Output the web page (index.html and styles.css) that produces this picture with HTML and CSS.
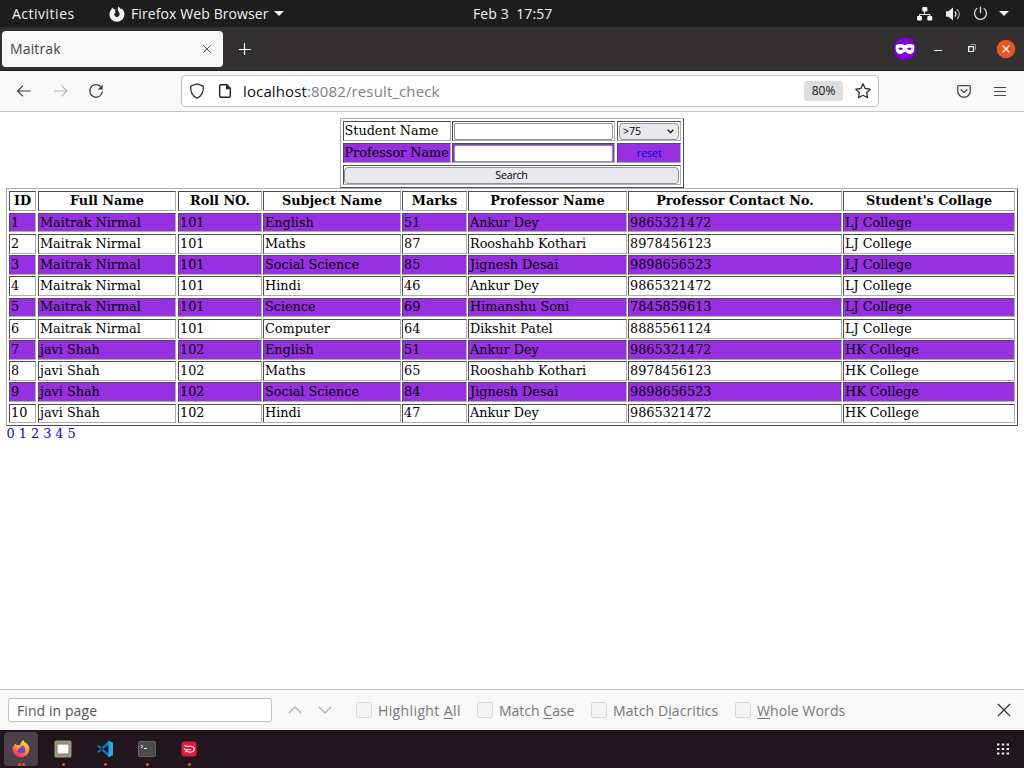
FILE: index.html
```html
<!DOCTYPE html>
<html lang="en">
<head>
<meta charset="utf-8">
<title>Maitrak</title>
<link rel="stylesheet" href="styles.css">
</head>
<body>
<div class="desktop">
  <header class="topbar">
    <span class="activities">Activities</span>
    <svg class="app-icon" width="16" height="16" viewBox="0 0 16 16"><path fill="#f2f2f2" d="M3.2 1.6 5.2 3.4 7 3.5 5.8 5.3 6.8 6.5C5.5 6.8 5 8 5.5 9.2 6 10.6 7.5 11.4 9 10.8 10.9 10 11.1 7.6 9.8 6.1 8.6 4.7 8.4 2.1 9.6.3 10.3 1.8 11.4 2.3 12.3 3.5L12.6 2.2C14.6 4 15.7 6.2 15.4 8.8 15 12.8 12 15.7 8 15.7 3.7 15.7.5 12.5.5 8.5.5 6.3 1.1 4.8 2.2 3.7Z"/></svg>
    <span class="app-name">Firefox Web Browser</span>
    <i class="caret"></i>
    <span class="clock">Feb 3&nbsp; 17:57</span>
    <svg class="net" width="16" height="14" viewBox="0 0 16 14"><g fill="#f2f2f2"><rect x="5.2" y="0" width="5.2" height="4.5" rx="1"/><rect x="0" y="9" width="5" height="4.4" rx="1"/><rect x="10.3" y="9" width="5" height="4.4" rx="1"/></g><path d="M7.5 4v3M2.500 9V7.500h10.400V9" fill="none" stroke="#f2f2f2"/></svg>
    <svg class="vol" width="15" height="14" viewBox="0 0 15 14"><path fill="#f2f2f2" d="M0 4.3h2.500L7 .6v12.800L2.500 9.700H0z"/><path d="M9 4.400q1.800 2.600 0 5.200" fill="none" stroke="#f2f2f2" stroke-width="1.200"/><path d="M11 2.100q4.600 4.900 0 9.800" fill="none" stroke="#aaa" stroke-width="1.200"/></svg>
    <svg class="power" width="15" height="15" viewBox="0 0 15 15"><path d="M4.300 2.300a6 6 0 1 0 6.400 0M7.500.8v6.500" fill="none" stroke="#ddd" stroke-width="1.300"/></svg>
    <i class="caret"></i>
  </header>

  <div class="tabs">
    <div class="tab"><span>Maitrak</span><svg width="10" height="10" viewBox="0 0 10 10"><path d="m1.300 1.300 7.400 7.400M8.700 1.300 1.300 8.700" stroke="#555" stroke-width="1"/></svg></div>
    <svg class="plus" width="12" height="12" viewBox="0 0 12 12"><path d="M5.500 0v12M0 6.500h12" stroke="#fff" stroke-width="1.200"/></svg>
    <svg class="mask" width="24" height="24" viewBox="0 0 24 24"><circle cx="12" cy="12" r="11.300" fill="#8000d7"/><path fill="#fff" d="M2.800 8.600C5 6.400 9.500 6.700 12 8.300c2.500-1.600 7-1.900 9.200.3C21.800 12.500 21 17 16.800 17 14.500 17 13.500 15 12 15s-2.500 2-4.800 2C3 17 2.200 12.500 2.800 8.600z"/><path fill="#8000d7" d="M5.300 11.800q2.300-2.600 4.800 0-2.500 2.500-4.800 0zM13.900 11.800q2.500-2.600 4.800 0-2.300 2.500-4.800 0z"/></svg>
    <i class="minimize"></i>
    <svg class="restore" width="9" height="9" viewBox="0 0 9 9"><path d="M2.500.5h5v5.500" fill="none" stroke="#999"/><path d="M.7 2.700h4.800v4.800H.7z" fill="none" stroke="#fff" stroke-width="1.200"/></svg>
    <svg class="close" width="20" height="20" viewBox="0 0 20 20"><circle cx="10" cy="10" r="9.300" fill="#e95420"/><path d="m6.500 6.500 7 7M13.500 6.500l-7 7" stroke="#fff" stroke-width="1.300"/></svg>
  </div>

  <div class="toolbar">
    <svg class="back" width="16" height="14" viewBox="0 0 16 14"><path d="M14.800 7H1.800M7 1.600 1.600 7 7 12.400" fill="none" stroke="#3c3c3c" stroke-width="1.200"/></svg>
    <svg class="forward" width="16" height="14" viewBox="0 0 16 14"><path d="M1 7h13M8.600 1.600 14 7l-5.400 5.400" fill="none" stroke="#b5b5b5" stroke-width="1.200"/></svg>
    <svg class="reload" width="16" height="16" viewBox="0 0 16 16"><path d="M12.500 3.500A6.300 6.300 0 1 0 14.300 8.500" fill="none" stroke="#3c3c3c" stroke-width="1.300"/><path fill="#3c3c3c" d="M14.700 1.500v5H9.700z"/></svg>
    <div class="urlbar">
      <svg class="shield" width="16" height="16" viewBox="0 0 16 16"><path d="M8 .8 14.300 3.200C14.700 8.500 12.500 13 8 15.200 3.500 13 1.300 8.500 1.700 3.200Z" fill="none" stroke="#333" stroke-width="1.300" stroke-linejoin="round"/></svg>
      <svg class="page-icon" width="12" height="14" viewBox="0 0 12 14"><path d="M2 .7h5.800l3.500 3.600V12q0 1.300-1.300 1.300H2Q.7 13.300.7 12V2Q.7.7 2 .7z" fill="none" stroke="#222" stroke-width="1.400"/><path d="M7 .5v4.700h4.600z" fill="#222"/></svg>
      <span class="url"><b>localhost</b>:8082/result_check</span>
      <span class="zoom">80%</span>
      <svg class="star" width="16" height="16" viewBox="0 0 16 16"><path d="m8 .9 2.200 4.600 5 .7-3.600 3.500.9 5L8 12.300l-4.500 2.400.9-5L.8 6.200l5-.7z" fill="none" stroke="#333" stroke-width="1.300" stroke-linejoin="round"/></svg>
    </div>
    <svg class="pocket" width="14" height="13" viewBox="0 0 14 13"><path d="M2 .7h10q1.300 0 1.300 1.300v4.200a6.300 6 0 0 1-12.600 0V2Q.7.7 2 .7z" fill="none" stroke="#444" stroke-width="1.300"/><path d="m3.700 4.400 3.300 3 3.300-3" fill="none" stroke="#444" stroke-width="1.400"/></svg>
    <svg class="menu" width="12" height="11" viewBox="0 0 12 11"><path d="M0 1.500h12M0 5.500h12M0 9.500h12" stroke="#444" stroke-width="1.100"/></svg>
  </div>

  <main class="page">
    <form class="search-table">
      <div class="cell">Student Name</div>
      <div class="cell field"><input type="text"></div>
      <div class="cell field"><div class="select">&gt;75<svg width="7" height="5" viewBox="0 0 7 5"><path d="m.6.8 2.900 2.900L6.400.8" fill="none" stroke="#111" stroke-width="1.300"/></svg></div></div>
      <div class="cell purple">Professor Name</div>
      <div class="cell field purple"><input type="text"></div>
      <div class="cell purple reset"><span>reset</span></div>
      <div class="cell field wide"><button type="button">Search</button></div>
    </form>
    <div class="results" id="results"></div>
    <nav class="pages">0 1 2 3 4 5</nav>
  </main>

  <div class="findbar">
    <div class="find-input">Find in page</div>
    <svg class="up" width="14" height="8" viewBox="0 0 14 8"><path d="m1 7 6-6 6 6" fill="none" stroke="#aaa" stroke-width="1.200"/></svg>
    <svg class="down" width="14" height="8" viewBox="0 0 14 8"><path d="m1 1 6 6 6-6" fill="none" stroke="#aaa" stroke-width="1.200"/></svg>
    <label class="opt highlight"><i></i><span>Highlight <u>A</u>ll</span></label>
    <label class="opt case"><i></i><span>Match <u>C</u>ase</span></label>
    <label class="opt diacritics"><i></i><span>Match D<u>i</u>acritics</span></label>
    <label class="opt whole"><i></i><span><u>W</u>hole Words</span></label>
    <svg class="find-close" width="14" height="14" viewBox="0 0 14 14"><path d="m1 1 12 12M13 1 1 13" stroke="#333" stroke-width="1.200"/></svg>
  </div>

  <footer class="dock">
    <div class="launcher active"><svg width="18" height="18" viewBox="0 0 18 18"><defs><linearGradient id="fx" x1=".8" y1="0" x2=".3" y2="1"><stop offset="0" stop-color="#fff04a"/><stop offset=".45" stop-color="#ff9a1f"/><stop offset="1" stop-color="#f5245b"/></linearGradient></defs><path fill="url(#fx)" d="M3 3.500 4.700 5 7.500 5 9.500 2 11 0 13.500 3 15 3.500 17 6.500C18.500 12.500 14 17.500 9 17.500S-.2 13 .7 7L2 5.600Z"/><circle cx="9.300" cy="9.400" r="3.900" fill="#7543d6"/><path fill="#ff9b25" d="m3 6 6-.5 1.300 1-2.500 1.300-2.300 2z"/></svg><em></em><em></em></div>
    <div class="launcher"><svg width="18" height="18" viewBox="0 0 18 18"><rect x=".5" y=".5" width="17" height="17" rx="1.500" fill="#9b9581"/><rect x="3" y="4" width="12" height="10" rx="1" fill="#faf9f5" stroke="#7e7969"/></svg><em></em></div>
    <div class="launcher"><svg width="18" height="18" viewBox="0 0 18 18"><path d="m1 6 1.300-1L13 13.500v3.900zM1 12l1.300 1L13 4.500V.6z" fill="#087cc1"/><path d="m12.500.8 4.500 2v12.400l-4.500 2z" fill="#29a8ec"/></svg><em></em></div>
    <div class="launcher"><svg width="18" height="18" viewBox="0 0 18 18"><rect x=".5" y="1.500" width="17" height="15" rx="1.500" fill="#4b4b4b" stroke="#636363"/><path d="m3 5 2 1.500L3 8M6 8.500h3" fill="none" stroke="#eee"/></svg><em></em></div>
    <div class="launcher"><svg width="18" height="18" viewBox="0 0 18 18"><rect x="1.500" y="1.500" width="15" height="15" rx="3" fill="#e9163d"/><path d="M4.500 5.300 6 6.300h4.500q3.800.2 3.800 3-.3 2.900-4.300 2.900-3.300 0-4-2.400M3.800 8.500l1.700 1 5.500.2M5 12l1.500-.8" fill="none" stroke="#fff" stroke-width="1.100"/></svg><em></em></div>
    <svg class="apps" width="12" height="12" viewBox="0 0 12 12"><path d="M0 1.500h12M0 6h12M0 10.500h12" stroke="#eee" stroke-width="2.200" stroke-dasharray="2.400"/></svg>
  </footer>
</div>
<script src="results.js"></script>
</body>
</html>
```
FILE: styles.css
```css
* { box-sizing: border-box; }
body { margin: 0; font-family: "Open Sans", "Noto Sans", sans-serif; }
svg { display: block; flex: none; }
.desktop { width: 1024px; height: 768px; display: flex; flex-direction: column; overflow: hidden; background: #fff; }

.topbar { height: 27px; background: #1d1d1d; color: #f2f2f2; font-size: 14px; line-height: 27px; display: flex; align-items: center; white-space: nowrap; }
.topbar span { flex: none; }
.activities { margin-left: 12px; width: 97px; letter-spacing: .5px; }
.app-icon { margin-right: 6px; }
.app-name { width: 138px; letter-spacing: .1px; }
.caret { flex: none; margin-left: 5px; border: 5px solid transparent; border-top-color: #f2f2f2; border-bottom: 0; }
.clock { width: 80px; margin-left: 189px; letter-spacing: .1px; }
.net { margin-left: 364px; }
.vol { margin-left: 13px; }
.power { margin-left: 12px; }
.power + .caret { margin-left: 11px; }

.tabs { height: 44px; background: #323031; border-bottom: 1px solid #1c1a1f; display: flex; align-items: center; }
.tab { width: 221px; height: 36px; margin-left: 2px; padding: 0 11px 0 8px; border-radius: 4px; background: #f8f8f8; color: #444; font-size: 14px; letter-spacing: .15px; display: flex; align-items: center; justify-content: space-between; }
.plus { margin-left: 16px; }
.mask { margin-left: 642px; }
.minimize { flex: none; width: 8px; height: 1px; margin: 4px 0 0 17px; background: #fff; }
.restore { margin-left: 26px; }
.close { margin-left: 19px; }

.toolbar { height: 41px; background: #f8f8f8; border-bottom: 1px solid #c4c4c4; display: flex; align-items: center; }
.back { margin-left: 16px; }
.forward { margin-left: 21px; }
.reload { margin-left: 19px; }
.urlbar { width: 698px; height: 32px; margin-left: 77px; padding: 0 7px; border: 1px solid #bfbfbf; border-radius: 4px; background: #fff; display: flex; align-items: center; }
.page-icon { margin-left: 14px; }
.url { margin-left: 12px; font-size: 15px; letter-spacing: .13px; color: #808080; white-space: nowrap; }
.url b { font-weight: 400; color: #111; }
.zoom { width: 39px; height: 20px; margin-left: auto; border-radius: 3px; background: #dedede; color: #111; font-size: 12px; line-height: 20px; text-align: center; }
.star { margin-left: 12px; }
.pocket { margin-left: 78px; }
.menu { margin-left: 23px; }

.page { height: 577px; padding: 6px 6px 0; color: #000; font: 12.8px/17px "DejaVu Serif", serif; }
.search-table { width: 344px; height: 70px; margin: 0 auto; border: 1px solid; border-color: #adadad #4d4d4d #4d4d4d #adadad; padding: 2px; display: grid; grid-template-columns: 109px 165px 64px; grid-auto-rows: 22px; }
.cell { height: 20px; margin-right: 1px; padding: 0 0 0 1px; border: 1px solid; border-color: #4d4d4d #adadad #adadad #4d4d4d; white-space: nowrap; }
.search-table .cell { padding-left: .5px; }
.search-table .cell:nth-child(3n+2) { margin-right: 2px; }
.search-table .cell:nth-child(3n) { margin-right: 0; }
.search-table .wide { grid-column: 1 / -1; margin-right: 0; }
.purple { background: #9730e0; }
.field { padding: 1px 0 0 0; }
.field input { display: block; width: 100%; height: 17px; padding: 0; border: 1px solid #8f8f9d; border-radius: 2px; background: #fff; }
.search-table .field:nth-child(3n+2) { padding-left: 1px; padding-right: 1px; }
.search-table .wide { padding-left: 0; padding-right: 1px; }
.select { height: 17px; margin: 0 1px 0 .5px; padding: 0 4px 0 3px; border: 1px solid #8f8f9d; border-radius: 4px; background: #e9e9ed; font: 10.7px/15px "Open Sans", sans-serif; letter-spacing: -.1px; display: flex; align-items: center; justify-content: space-between; }
.reset { color: #00e; text-align: center; font: 10.7px/19px "Open Sans", sans-serif; letter-spacing: -.1px; }
.field button { display: block; width: 100%; height: 17px; padding: 0; border: 1px solid #8f8f9d; border-radius: 4px; background: #e9e9ed; color: #000; font: 10.7px/15px "Open Sans", sans-serif; letter-spacing: -.25px; }

.results { width: 1012px; height: 238px; padding: 2px; border: 1px solid; border-color: #adadad #4d4d4d #4d4d4d #adadad; display: grid; grid-template-columns: 29px 140px 85px 139px 66px 160px 215px 172px; grid-template-rows: 22px 21px 21px 21px 22px 21px 21px 21px 21px 22px 19px; }
.results .cell:nth-child(8n+1), .results .cell:nth-child(8n+2) { margin-right: 2px; }
.results .cell:nth-child(8n) { margin-right: 0; }
.results .low { height: 19px; }
.results .raised { line-height: 15px; }
.results .head { padding: 0; font-weight: 700; text-align: center; }
.pages { padding-left: .5px; color: #00e; line-height: 16px; }

.findbar { height: 41px; background: #f8f8f8; border-top: 1px solid #bfbfbf; color: #777; font-size: 14px; display: flex; align-items: center; white-space: nowrap; }
.find-input { width: 264px; height: 24px; margin-left: 8px; padding-left: 8px; border: 1px solid #bfbfbf; border-radius: 3px; background: #fff; color: #555; line-height: 23px; letter-spacing: .08px; }
.up { margin-left: 16px; }
.down { margin-left: 16px; }
.opt { display: flex; align-items: center; flex: none; letter-spacing: .1px; }
.opt i { width: 16px; height: 16px; margin-right: 6px; border: 1px solid #d8d8d8; border-radius: 2px; background: #f4f4f4; }
.opt u { text-underline-offset: 2px; }
.highlight { width: 121px; margin-left: 24px; letter-spacing: .38px; }
.case { width: 114px; letter-spacing: 0; }
.diacritics { width: 144px; }
.whole { width: 254px; }
.find-close { margin: 0 13px 0 auto; }

.dock { height: 38px; padding: 2px 15px 0 4px; background: #22151e; display: flex; gap: 8px; }
.launcher { width: 34px; height: 34px; border-radius: 4px; display: flex; flex-wrap: wrap; justify-content: center; padding-top: 8px; column-gap: 1px; }
.launcher svg { margin: 0 8px; }
.launcher em { width: 3px; height: 3px; margin-top: 5px; border-radius: 50%; background: #e95420; }
.active { background: #4b4049; }
.apps { margin: 11px 0 0 auto; }
```
FILE: results.js
```js
const heads = ["ID", "Full Name", "Roll NO.", "Subject Name", "Marks", "Professor Name", "Professor Contact No.", "Student's Collage"];
const m = "Maitrak Nirmal", j = "javi Shah";
const rows = [
  [1, m, 101, "English", 51, "Ankur Dey", "9865321472", "LJ College"],
  [2, m, 101, "Maths", 87, "Rooshahb Kothari", "8978456123", "LJ College"],
  [3, m, 101, "Social Science", 85, "Jignesh Desai", "9898656523", "LJ College"],
  [4, m, 101, "Hindi", 46, "Ankur Dey", "9865321472", "LJ College"],
  [5, m, 101, "Science", 69, "Himanshu Soni", "7845859613", "LJ College"],
  [6, m, 101, "Computer", 64, "Dikshit Patel", "8885561124", "LJ College"],
  [7, j, 102, "English", 51, "Ankur Dey", "9865321472", "HK College"],
  [8, j, 102, "Maths", 65, "Rooshahb Kothari", "8978456123", "HK College"],
  [9, j, 102, "Social Science", 84, "Jignesh Desai", "9898656523", "HK College"],
  [10, j, 102, "Hindi", 47, "Ankur Dey", "9865321472", "HK College"]
];
const grid = document.getElementById("results");
function addCell(text, cls) {
  const cell = document.createElement("div");
  cell.className = "cell " + cls;
  cell.textContent = text;
  grid.append(cell);
}
heads.forEach(h => addCell(h, "head"));
rows.forEach((row, n) => {
  const cls = (n % 2 ? "" : "purple ") + ([0, 4, 9].includes(n) ? "low " : "") + (n === 4 || n === 9 ? "raised" : "");
  row.forEach(value => addCell(value, cls));
});
```
